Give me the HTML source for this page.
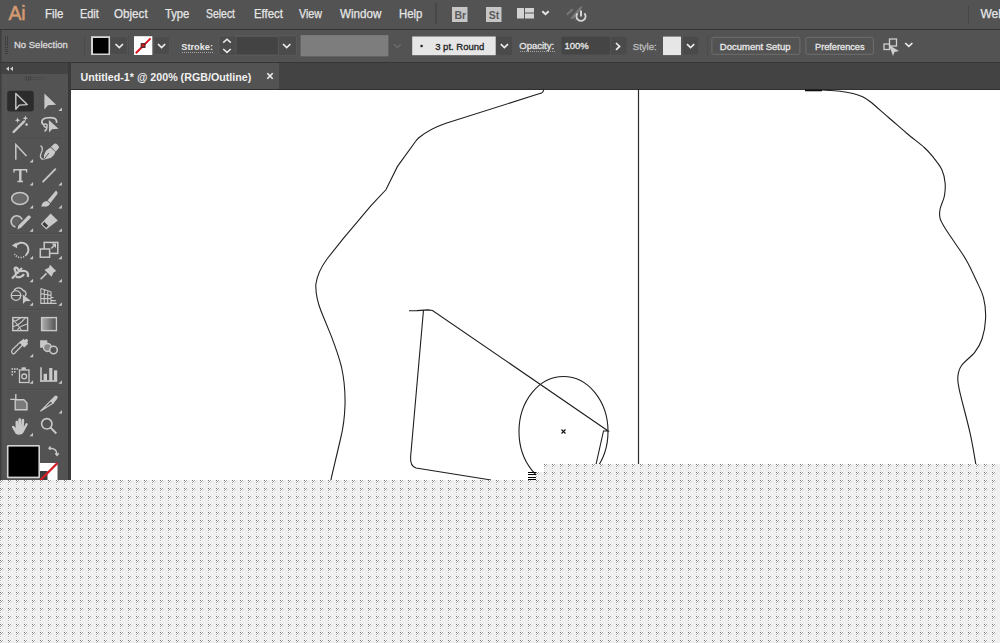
<!DOCTYPE html>
<html><head><meta charset="utf-8">
<style>
*{margin:0;padding:0;box-sizing:border-box}
html,body{width:1000px;height:643px;overflow:hidden;background:#535353;font-family:"Liberation Sans",sans-serif}
.a{position:absolute}
#menubar{left:0;top:0;width:1000px;height:29px;background:#535353}
#menuline{left:0;top:29px;width:1000px;height:1px;background:#363636}
#ctrl{left:0;top:30px;width:1000px;height:32px;background:#535353}
#ctrlline{left:0;top:62px;width:1000px;height:1px;background:#363636}
.mi{position:absolute;top:8.2px;font-size:12px;line-height:1;color:#e6e6e6;white-space:nowrap;-webkit-text-stroke:0.25px #e6e6e6}
#tbhead{left:0;top:63px;width:68px;height:11px;background:#434343}
#tb{left:0;top:74px;width:68px;height:420px;background:#535353}
#tbsep{left:68px;top:63px;width:3px;height:430px;background:#3a3a3a}
#tabbar{left:71px;top:63px;width:929px;height:27px;background:#434343}
#tab{left:71px;top:63px;width:208px;height:26px;background:#535353}
#tabline{left:71px;top:89px;width:929px;height:1px;background:#2f2f2f}
#canvas{left:71px;top:90px;width:929px;height:553px;background:#fff}
.cl{position:absolute;font-size:9.5px;line-height:1;color:#e8e8e8;white-space:nowrap;-webkit-text-stroke:0.3px currentColor}
</style></head><body>
<div id="menubar" class="a"></div>
<div id="menuline" class="a"></div>
<div id="ctrl" class="a"></div>
<div id="ctrlline" class="a"></div>
<div id="tbhead" class="a"></div>
<div id="tb" class="a"></div>
<div id="tbsep" class="a"></div>
<div id="tabbar" class="a"></div>
<div id="tab" class="a"></div>
<div id="tabline" class="a"></div>
<div id="canvas" class="a"></div>

<!-- menu -->
<div class="a" style="left:8.5px;top:3.8px;font-size:19.5px;line-height:1;color:#d59a72;letter-spacing:-0.3px;-webkit-text-stroke:0.5px #d59a72">Ai</div>
<div class="mi" style="left:45px;transform:scaleX(0.955);transform-origin:0 0">File</div>
<div class="mi" style="left:79.5px;transform:scaleX(0.91);transform-origin:0 0">Edit</div>
<div class="mi" style="left:114px;transform:scaleX(0.97);transform-origin:0 0">Object</div>
<div class="mi" style="left:165px;transform:scaleX(0.935);transform-origin:0 0">Type</div>
<div class="mi" style="left:206px;transform:scaleX(0.87);transform-origin:0 0">Select</div>
<div class="mi" style="left:253.5px;transform:scaleX(0.945);transform-origin:0 0">Effect</div>
<div class="mi" style="left:298.5px;transform:scaleX(0.89);transform-origin:0 0">View</div>
<div class="mi" style="left:340px;transform:scaleX(0.97);transform-origin:0 0">Window</div>
<div class="mi" style="left:398.5px;transform:scaleX(0.95);transform-origin:0 0">Help</div>
<div class="mi" style="left:980.5px">Web</div>
<div class="a" style="left:435px;top:3px;width:2px;height:21px;background:#474747"></div>
<div class="a" style="left:968px;top:6px;width:1px;height:18px;background:#474747"></div>
<svg class="a" style="left:0;top:0" width="1000" height="29">
  <rect x="452" y="7" width="15.5" height="15" fill="#c6c6c6"/>
  <rect x="486" y="7" width="15.5" height="15" fill="#c6c6c6"/>
  <text x="454.4" y="19" font-family="Liberation Sans" font-weight="bold" font-size="10.5" fill="#5a5a5a">Br</text>
  <text x="488.8" y="19" font-family="Liberation Sans" font-weight="bold" font-size="10.5" fill="#5a5a5a">St</text>
  <rect x="517" y="8" width="7" height="10.5" fill="#d2d2d2"/>
  <rect x="525" y="8" width="9" height="4.5" fill="#d2d2d2"/>
  <rect x="525" y="13.5" width="9" height="5" fill="#d2d2d2"/>
  <path d="M542.3 11.2 L545.5 14.2 L548.7 11.2" fill="none" stroke="#e6e6e6" stroke-width="2"/>
  <path d="M566 14 L572 8.5 L573.5 10 L567.5 15.5 Z" fill="#767676"/>
  <path d="M570 18.5 L579 8 L582.5 5.5 L581 9.5 L573.5 19 Z" fill="#7a7a7a"/>
  <path d="M574 21 L576.5 18 L577.5 19.5 Z" fill="#6e6e6e"/>
  <path d="M577.6 13.4 A4.5 4.5 0 1 0 584.4 13.4" fill="none" stroke="#d4d4d4" stroke-width="2"/>
  <line x1="581" y1="10.5" x2="581" y2="16.5" stroke="#d4d4d4" stroke-width="2"/>
</svg>

<!-- control bar -->
<svg class="a" style="left:0;top:30px" width="1000" height="32" viewBox="0 30 1000 32">
  <rect x="0" y="30" width="1.5" height="32" fill="#3e3e3e"/>
  <g fill="#3f3f3f"><rect x="5" y="36" width="1" height="10"/><rect x="7" y="36" width="1" height="10"/>
  <rect x="5" y="47" width="3" height="1"/><rect x="5" y="49" width="3" height="1"/><rect x="5" y="51" width="3" height="1"/><rect x="5" y="53" width="3" height="1"/></g>
  <rect x="84" y="35" width="1" height="21" fill="#4b4b4b"/>
  <rect x="91" y="36.2" width="19" height="18.8" fill="#d4d4d4"/>
  <rect x="93" y="38" width="15.5" height="15.5" fill="#000"/>
  <rect x="110.5" y="36.8" width="17" height="17.7" rx="1.5" fill="#4b4b4b" stroke="#575757" stroke-width="0.8"/>
  <path d="M115.5 44 L119.3 47.6 L123 44" fill="none" stroke="#ececec" stroke-width="1.7"/>
  <rect x="128" y="35" width="1" height="21" fill="#4b4b4b"/>
  <rect x="134" y="36.2" width="18.3" height="18.8" fill="#fdfdfd"/>
  <line x1="135.8" y1="53.2" x2="150.6" y2="38.4" stroke="#d8141f" stroke-width="2"/>
  <rect x="141.2" y="43.6" width="3.8" height="3.8" fill="#d8141f" stroke="#3a2a2a" stroke-width="1"/>
  <rect x="154" y="36.8" width="15.5" height="17.7" rx="1.5" fill="#4b4b4b" stroke="#575757" stroke-width="0.8"/>
  <path d="M158 44 L161.6 47.6 L165.2 44" fill="none" stroke="#ececec" stroke-width="1.7"/>
  <rect x="219" y="35.8" width="77.5" height="19.5" rx="1.5" fill="#4b4b4b" stroke="#5c5c5c" stroke-width="0.8"/>
  <path d="M223.2 42.6 L227 39.2 L230.8 42.6" fill="none" stroke="#e8e8e8" stroke-width="1.6"/>
  <path d="M223.2 49 L227 52.4 L230.8 49" fill="none" stroke="#e8e8e8" stroke-width="1.6"/>
  <rect x="236" y="36.4" width="42.3" height="18.6" fill="#434343" stroke="#5a5a5a" stroke-width="0.8"/>
  <path d="M283 44 L286.7 47.5 L290.4 44" fill="none" stroke="#ececec" stroke-width="1.7"/>
  <rect x="301" y="35.6" width="87" height="20.4" fill="#7d7d7d" stroke="#858585" stroke-width="0.6"/>
  <path d="M393.8 44.2 L397.4 47.4 L401 44.2" fill="none" stroke="#6a6a6a" stroke-width="1.5"/>
  <rect x="412.2" y="36.5" width="83.5" height="18.7" fill="#e6e6e6"/>
  <circle cx="421.6" cy="46" r="1.3" fill="#222"/>
  <rect x="496" y="36.8" width="16" height="18" rx="1" fill="#4a4a4a"/>
  <path d="M500.8 44.2 L504.4 47.6 L508 44.2" fill="none" stroke="#ececec" stroke-width="1.7"/>
  
  
  <rect x="561.4" y="36.8" width="48.8" height="17.6" rx="2" fill="#454545"/>
  <rect x="611" y="36.8" width="15.5" height="17.6" rx="1.5" fill="#4a4a4a"/>
  <path d="M616 43 L619.6 46.4 L616 49.8" fill="none" stroke="#ececec" stroke-width="1.7"/>
  <rect x="663" y="36.6" width="18" height="18.5" fill="#e6e6e6"/>
  <rect x="683" y="36.8" width="15.2" height="17.6" rx="1.5" fill="#4a4a4a"/>
  <path d="M687 44.2 L690.6 47.6 L694.2 44.2" fill="none" stroke="#ececec" stroke-width="1.7"/>
  <rect x="707" y="35" width="1" height="21" fill="#4b4b4b"/>
  <rect x="711.9" y="37.3" width="88" height="17" rx="2" fill="none" stroke="#6e6e6e" stroke-width="1"/>
  <rect x="805.9" y="37.3" width="67.5" height="17" rx="2" fill="none" stroke="#6e6e6e" stroke-width="1"/>
  <rect x="889.5" y="39" width="7" height="7" fill="none" stroke="#cfcfcf" stroke-width="1.3"/>
  <rect x="884" y="44" width="5.5" height="5.5" fill="none" stroke="#cfcfcf" stroke-width="1.3"/>
  <path d="M889 45 L899 51 L894.5 52 L893 56 Z" fill="#cfcfcf"/>
  <path d="M905.2 43 L908.8 46.4 L912.4 43" fill="none" stroke="#ececec" stroke-width="1.7"/>
</svg>
<div class="cl" style="left:14px;top:40.2px;color:#dadada">No Selection</div>
<div class="a" style="left:182px;top:52px;width:31px;height:1px;background:repeating-linear-gradient(90deg,#a8a8a8 0 1px,transparent 1px 2px)"></div>
<div class="a" style="left:520px;top:51px;width:36px;height:1px;background:repeating-linear-gradient(90deg,#a8a8a8 0 1px,transparent 1px 2px)"></div>
<div class="cl" style="left:181.3px;top:42.6px;font-size:9.2px;font-weight:bold;color:#e8e8e8;-webkit-text-stroke:0">Stroke:</div>
<div class="cl" style="left:435.2px;top:42.1px;color:#1e1e1e">3 pt. Round</div>
<div class="cl" style="left:519.3px;top:41.4px;color:#e4e4e4">Opacity:</div>
<div class="cl" style="left:564.5px;top:41px;color:#e8e8e8">100%</div>
<div class="cl" style="left:632.8px;top:41.8px;color:#bdbdbd">Style:</div>
<div class="cl" style="left:719.8px;top:42.3px;color:#e8e8e8">Document Setup</div>
<div class="cl" style="left:815px;top:42.5px;font-size:9.2px;color:#e8e8e8">Preferences</div>

<!-- tab title -->
<div class="a" style="left:80.5px;top:71.8px;font-size:10.7px;line-height:1;font-weight:bold;color:#f0f0f0;white-space:nowrap">Untitled-1* @ 200% (RGB/Outline)</div>
<svg class="a" style="left:266px;top:72px" width="8" height="8"><path d="M1.3 1.3 L6.7 6.7 M6.7 1.3 L1.3 6.7" stroke="#f0f0f0" stroke-width="1.6"/></svg>
<svg class="a" style="left:0;top:63px" width="68" height="20"><path d="M9 3.5 L6 5.8 L9 8 Z M13 3.5 L10 5.8 L13 8 Z" fill="#d0d0d0"/></svg>

<!-- toolbar -->
<svg class="a" style="left:0;top:63px" width="68" height="420" viewBox="0 63 68 420">
  <g fill="#4b4b4b"><rect x="24" y="77" width="20" height="1"/><rect x="24" y="79" width="20" height="1"/></g>
  <g fill="#444"><rect x="26" y="76" width="1" height="5"/><rect x="28" y="76" width="1" height="5"/><rect x="30" y="76" width="1" height="5"/></g>
  <rect x="0" y="63" width="1.5" height="417" fill="#3e3e3e"/><rect x="5" y="74" width="1" height="406" fill="#575757"/>
  <g fill="#4c4c4c"><rect x="8" y="233" width="55" height="1"/><rect x="8" y="309" width="55" height="1"/><rect x="8" y="389" width="55" height="1"/><rect x="8" y="138.5" width="55" height="1"/></g>
  <g fill="#585858"><rect x="8" y="234" width="55" height="1"/><rect x="8" y="310" width="55" height="1"/><rect x="8" y="390" width="55" height="1"/><rect x="8" y="139.5" width="55" height="1"/></g>
  <rect x="7.2" y="90.8" width="26.6" height="20.8" rx="3" fill="#2c2c2c"/>
  <g fill="#c9c9c9" stroke="none">
    <!-- triangles -->
    <path d="M61.9 107.4 V110.9 H58.4 Z M33.1 159 V162.4 H29.6 Z M33.1 181.9 V185.4 H29.6 Z M61.9 181.9 V185.4 H58.4 Z M33.1 205 V208.5 H29.6 Z M61.9 205 V208.5 H58.4 Z M33.1 228.3 V231.8 H29.6 Z M61.9 228.3 V231.8 H58.4 Z M33.1 255.8 V259.3 H29.6 Z M61.9 255.8 V259.3 H58.4 Z M33.1 278.8 V282.3 H29.6 Z M61.9 278.8 V282.3 H58.4 Z M33.1 302.2 V305.7 H29.6 Z M61.9 302.2 V305.7 H58.4 Z M33.2 353.8 V357.3 H29.7 Z M33.1 380.2 V383.7 H29.6 Z M61.9 380.2 V383.7 H58.4 Z M62 410 V413.5 H58.5 Z M33 432.8 V436.3 H29.5 Z"/>
    <!-- direct selection -->
    <path d="M44.4 93.4 L44.4 109.4 L48 105.3 L56.1 104.7 Z"/>
    <!-- lasso arrow -->
    <path d="M48.8 120 L49 132.6 L52 129.3 L58.6 128.8 Z"/>
    <!-- pen nib -->
    <path d="M43.6 159.8 L44.2 154.5 Q45.5 150 50.4 147.4 L55.4 151.8 Q54 156.5 49.5 158.3 Z"/>
    <path d="M50.9 146.8 L54 144 Q55.6 142.9 57.2 144.4 L58.6 145.9 Q59.6 147.4 58.4 148.6 L55.8 151.4 Z"/>
    <path d="M44 159.5 L48.8 153" stroke="#535353" stroke-width="0.9"/>
    <!-- type -->
    <path d="M13.3 169 H27.3 V172.4 H25.9 V170.6 H21.5 V180.7 H23 V182.2 H17.4 V180.7 H19.1 V170.6 H14.7 V172.4 H13.3 Z"/>
    <!-- paintbrush -->
    <path d="M56 190.6 Q58.5 192.5 57 194.5 L50.5 203 L47.5 200.5 Z"/>
    <path d="M47 201 L50 203.6 Q49 207 44.5 206.6 L41.2 206.5 Q42 203 44 201.8 Z"/>
    <!-- eraser -->
    <path d="M50.6 213.4 L57.8 220.4 L46.3 229.6 L40.8 224.1 Z"/>
    <!-- scale arrow -->
    <path d="M56 243.6 L56 248 L51.6 243.6 Z"/>
    <!-- puppet pin -->
    <path d="M50 264.8 L56.2 271 L53.5 272.5 L51.5 276.8 L44.5 269.8 L48.8 267.8 Z"/>
    <!-- shape builder arrow -->
    <path d="M22.8 294.6 L23 304 L25.5 301.2 L31 301 Z"/>
    <!-- hand -->
    <path d="M15.5 422 Q15.5 420.5 16.8 420.5 Q18 420.5 18 422 V426 L18.3 419.5 Q18.5 418 19.8 418 Q21 418 21 419.5 V426 L21.5 420 Q21.8 418.8 23 418.8 Q24.2 419 24.2 420.5 L23.8 427 L25.5 423.8 Q26.5 422.6 27.5 423.4 Q28 424 27.5 425 L24 431.5 Q22.5 434.8 19 434.8 Q15.5 434.8 14.5 431.5 L12 427.5 Q11.6 426.3 12.6 425.8 Q13.6 425.4 14.4 426.5 L15.6 428 Z"/>
    <!-- blend square -->
    <rect x="40.1" y="340.3" width="7.2" height="7.4"/>
    <!-- column graph bars -->
    <rect x="40.2" y="367.3" width="1.6" height="14.6"/><rect x="40.2" y="380.2" width="17" height="1.6"/>
    <rect x="43.6" y="373.8" width="3.4" height="7"/><rect x="49.2" y="368" width="3.2" height="13"/><rect x="54" y="370.3" width="3.2" height="10.5"/>
    <!-- symbol sprayer dots -->
    <rect x="11.5" y="368.2" width="1.6" height="1.6"/><rect x="14" y="368.2" width="1.6" height="1.6"/><rect x="16.5" y="368.2" width="1.6" height="1.6"/>
    <rect x="11.5" y="371" width="1.6" height="1.6"/><rect x="14" y="371" width="1.6" height="1.6"/><rect x="11.5" y="373.8" width="1.6" height="1.6"/>
    <rect x="21.6" y="367.3" width="4.2" height="2.6"/>
    <!-- slice blade -->
    <path d="M50.2 400.6 L54.4 396.2 Q56 394.8 57.2 396 Q58.4 397.4 57 399 L53.4 403.4 Z"/>
  </g>
  <g fill="none" stroke="#c9c9c9" stroke-width="1.4">
    <path d="M15.8 93.6 L15.8 109.2 L19.3 105.1 L27.2 104.6 Z" stroke-linejoin="round"/>
    <path d="M13.6 132 L24.2 121.4" stroke-width="2.4" stroke-linecap="round"/>
    <path d="M44.5 125 C40.5 123.5 41 119 46 118 C52 116.8 57.5 118 56.5 122.8" stroke-width="1.7"/>
    <circle cx="45.6" cy="125.6" r="1.6" stroke-width="1.5"/><path d="M46.8 126.8 C47 129 46 130.5 44.5 131.2" stroke-width="1.5"/>
    <path d="M15.8 159.8 L15.8 144.6 L26.5 155.9" stroke-width="1.5"/>
    <path d="M40.6 145.6 C43.5 147.5 42.5 150.5 41 153.5 C39.8 156.5 40.5 159.4 43.4 159.4" stroke-width="1.3"/>
    <path d="M42.6 182.2 L55.8 168.6" stroke-width="1.8"/>
    <ellipse cx="19.9" cy="198.4" rx="8.2" ry="6" fill="#6a6a6a" stroke-width="1.5"/>
    <path d="M15.4 227 A5.7 5.7 0 1 1 22.2 219.6" fill="#626262" stroke-width="1.5"/>
    
    <path d="M15.5 246 A7 7 0 1 1 26 255" stroke-width="2"/>
    <path d="M26 255 A7 7 0 0 1 14.5 254" stroke-width="1.6" stroke-dasharray="1.2 1.3"/>
    <rect x="44.2" y="242.4" width="13.6" height="11" stroke-width="1.5"/>
    <rect x="40.3" y="249" width="9.3" height="8.2" stroke-width="1.5" fill="#535353"/>
    <path d="M51.4 248.4 L55 244.8" stroke-width="1.5"/>
    <path d="M12 278.5 L15.5 275 C17 273 15 271 14.5 269 C15 266.5 17.5 267.5 18.5 270 C20 272 23 270.5 25 271 C27.5 271.5 28.5 274 27.8 277 M17 273.5 L22 268 M16 276.5 C19 278.5 23 276 24 274" stroke-width="2.2"/>
    <path d="M40.6 279.2 L46.5 273.4" stroke-width="1.6"/>
    <circle cx="16" cy="295.5" r="4.8" stroke-width="1.3"/>
    <path d="M14 290.5 C16 286.5 22 287.5 23 290.5 C26 291 27 294 25 296" stroke-width="1.3"/>
    <path d="M11.5 295.5 H21.5" stroke-width="1"/>
    <path d="M40.8 288.6 V303.4 H56.6 M40.8 288.6 L51 291.8 V303.4 M44.3 289.7 V303.4 M47.7 290.7 V303.4 M40.8 293.6 L51 295.2 M40.8 298.4 L51 298.8 M51 297.2 L53.5 297.6 M51 300.4 L56 300.8" stroke-width="1.1"/>
    <rect x="12.8" y="317.6" width="14.8" height="13" stroke-width="1.4"/>
    <path d="M12.8 322 C17 321 20 318 21 317.6 M12.8 326.5 C18 326 22 322 25.5 317.6 M17 330.6 C19 326 24 325 27.6 324 M13 319.5 C17 324 20 328 21.5 330.6" stroke-width="1.1"/>
    <path d="M12.5 353.5 C11 352 11.5 350.5 13 349 L20.5 341.8 L23.2 344.5 L15.8 352 C14.5 353.5 13.5 354.5 12.5 353.5 Z" stroke-width="1.2"/>
    <circle cx="47.5" cy="347.5" r="4" stroke-width="1.4" fill="#888"/>
    <circle cx="53.5" cy="350" r="3.8" stroke-width="1.5" fill="#535353"/>
    <rect x="19.5" y="370" width="9.5" height="12.5" stroke-width="1.3"/>
    <circle cx="24.2" cy="376.4" r="2.4" stroke-width="1.3"/>
    <path d="M15.8 394 V399.2 M10.3 399.4 H15.8" stroke-width="1.4"/>
    <path d="M15.2 399.8 H23.8 L27 403 V409.8 H15.2 Z" fill="#7a7a7a" stroke-width="1.4"/>
    <path d="M40.8 411 L50.6 400.8 L53.2 403 Z" stroke-width="1.2" stroke-linejoin="round"/>
    <circle cx="46.8" cy="423.8" r="5.2" stroke-width="1.6"/>
    <path d="M50.6 427.6 L56.3 433.5" stroke-width="2"/>
  </g>
  <path d="M11.8 245.6 L16.5 242.6 L17.2 248.2 Z" fill="#c9c9c9"/>
  <path d="M19.2 342.6 L23.5 338.8 L24.8 340 L26 339 Q28.5 338.5 28 341.5 L27 342.5 L28.2 343.8 L24.3 347.6 Z" fill="#c9c9c9"/>
  <path d="M17.4 229.4 L18.3 225.4 L28.2 215.6 Q30.4 215 31 217.4 L21.2 227.4 Z" fill="#c9c9c9"/>
  <!-- stars for magic wand -->
  <path d="M17.6 117.4 L18.4 119.4 L20.4 120.2 L18.4 121 L17.6 123 L16.8 121 L14.8 120.2 L16.8 119.4 Z M25.4 115.4 L26.2 117.4 L28.2 118.2 L26.2 119 L25.4 121 L24.6 119 L22.6 118.2 L24.6 117.4 Z" fill="#c9c9c9"/>
  <circle cx="26.6" cy="124.6" r="1.3" fill="#c9c9c9"/>
  <path d="M41.8 224.1 L44.4 221.6 L48.5 225.6 L46.2 228.4 Z" fill="#3a3a3a" stroke="#c9c9c9" stroke-width="0.9"/>
  <defs><linearGradient id="gr" x1="0" x2="1"><stop offset="0" stop-color="#b0b0b0"/><stop offset="1" stop-color="#505050"/></linearGradient></defs>
  <rect x="41.6" y="317.6" width="14.8" height="13" fill="url(#gr)" stroke="#c9c9c9" stroke-width="1.4"/>
  <!-- fill / stroke boxes -->
  <rect x="24" y="463" width="33.5" height="33.5" fill="#fff"/>
  <rect x="31" y="471" width="16.5" height="17.5" fill="#3c3c3c"/>
  <line x1="23.5" y1="497" x2="57.5" y2="463" stroke="#d51c24" stroke-width="2.3"/>
  <rect x="5" y="443" width="35" height="37" fill="#535353"/>
  <rect x="6.9" y="445" width="33.1" height="33.2" rx="1.2" fill="#d4d4d4"/>
  <rect x="8.5" y="446.6" width="29.9" height="30" fill="#000"/>
  <path d="M50.5 446.5 L49 448.2 L50.5 449.8 M49.2 448.2 C54 448 57 450 57 454.5 M55.3 453.2 L57 455.4 L58.7 453.2" fill="none" stroke="#c9c9c9" stroke-width="1.4"/>
</svg>

<!-- canvas drawing -->
<svg class="a" style="left:0;top:0" width="1000" height="643" viewBox="0 0 1000 643">
  <g fill="none" stroke="#1e1e1e" stroke-width="1.1">
    <path d="M543.5 89.8 Q543.6 93 539 93.8 L446 123.2 Q429 129 418.5 138 Q416.5 140 415.5 141.5 L397.5 166.4 L385.9 189.8 L371 205.6 L343 238.8 L327 259 Q317.5 272 315.8 284.5 Q315.5 297 321 311 L331 335.4 Q338.5 355 341.5 367 Q345.5 385 345 405 Q344.5 423 340.5 439 L331.5 477 L330 486"/>
    <line x1="638.5" y1="90" x2="638.5" y2="464" stroke="#2a2a2a" stroke-width="1.2"/>
    <path d="M409 310.8 L417 310.6 L428 309.9 L432.5 310.5 L608.2 431 L603.5 431 L596 464.5"/>
    <path d="M423.5 310 L410.6 457 Q410 466 416 468 L491 480"/>
    <ellipse cx="563.5" cy="431.5" rx="44.5" ry="55"/>
    <path d="M821.8 90.0 C824.8 90.2 834.8 90.6 840.0 91.2 C845.2 91.8 849.3 92.6 853.0 93.5 C856.7 94.4 859.2 95.2 862.0 96.5 C864.8 97.8 865.7 98.1 870.0 101.5 C874.3 104.9 881.8 111.7 888.0 117.0 C894.2 122.3 901.0 128.4 907.0 133.5 C913.0 138.6 919.9 143.5 924.3 147.5 C928.7 151.5 930.6 154.0 933.6 157.7 C936.6 161.4 940.1 165.7 942.0 169.9 C943.9 174.1 944.7 178.6 945.1 182.9 C945.5 187.2 945.2 191.7 944.4 196.0 C943.6 200.3 940.8 205.3 940.1 209.0 C939.4 212.7 939.3 215.3 940.1 218.4 C940.9 221.5 942.1 223.3 944.8 227.7 C947.4 232.0 952.4 239.1 956.0 244.5 C959.6 249.9 962.9 254.1 966.2 260.0 C969.6 265.9 973.2 273.7 976.1 280.0 C979.0 286.3 981.9 291.3 983.5 297.7 C985.1 304.1 985.9 311.5 985.6 318.4 C985.4 325.3 983.8 333.3 982.0 339.0 C980.2 344.7 978.1 347.9 974.7 352.4 C971.3 356.8 964.2 361.5 961.4 365.7 C958.6 369.9 958.0 373.1 957.8 377.5 C957.5 381.9 957.8 382.9 959.9 392.3 C962.0 401.7 967.5 421.3 970.2 433.6 C972.9 445.9 975.0 459.6 976.1 466.0 C977.2 472.4 976.9 471.0 977.0 472.0"/>
  </g>
  <rect x="805" y="89.5" width="17" height="1.8" fill="#111"/>
  <path d="M561.5 429.5 l4 4 M565.5 429.5 l-4 4" stroke="#111" stroke-width="1.1"/>
  <g fill="#000" shape-rendering="crispEdges"><rect x="528" y="472" width="8" height="1"/><rect x="528" y="474" width="8" height="1"/><rect x="528" y="477" width="8" height="1"/><rect x="528" y="479" width="8" height="1"/></g>
</svg>

<!-- pattern -->
<svg class="a" style="left:0;top:0" width="1000" height="643" viewBox="0 0 1000 643">
  <defs>
    <pattern id="dots" x="0" y="0" width="8" height="8" patternUnits="userSpaceOnUse">
      <rect width="8" height="8" fill="#f0f0f0"/>
      <rect x="0" y="0" width="1" height="1" fill="#707070"/>
      <rect x="1" y="0" width="1" height="1" fill="#fdfdfd"/>
      <rect x="2" y="0" width="1" height="1" fill="#b0b0b0"/>
      <rect x="3" y="0" width="1" height="1" fill="#fafafa"/>
      <rect x="0" y="1" width="1" height="1" fill="#fdfdfd"/>
      <rect x="1" y="1" width="1" height="1" fill="#a6a6a6"/>
      <rect x="2" y="1" width="1" height="1" fill="#fafafa"/>
      <rect x="3" y="1" width="1" height="1" fill="#e6e6e6"/>
      <rect x="0" y="2" width="1" height="1" fill="#a4a4a4"/>
      <rect x="1" y="2" width="1" height="1" fill="#fafafa"/>
      <rect x="2" y="2" width="1" height="1" fill="#e8e8e8"/>
      <rect x="0" y="3" width="1" height="1" fill="#fcfcfc"/>
      <rect x="0" y="4" width="1" height="1" fill="#c4c4c4"/>
      <rect x="1" y="4" width="1" height="1" fill="#f8f8f8"/>
      <rect x="0" y="5" width="1" height="1" fill="#fafafa"/>
      <rect x="0" y="6" width="1" height="1" fill="#e8e8e8"/>
    </pattern>
  </defs>
  <path d="M0 480 L536 480 L536 472 L544 472 L544 464 L1000 464 L1000 643 L0 643 Z" fill="url(#dots)" shape-rendering="crispEdges"/>
</svg>
</body></html>
